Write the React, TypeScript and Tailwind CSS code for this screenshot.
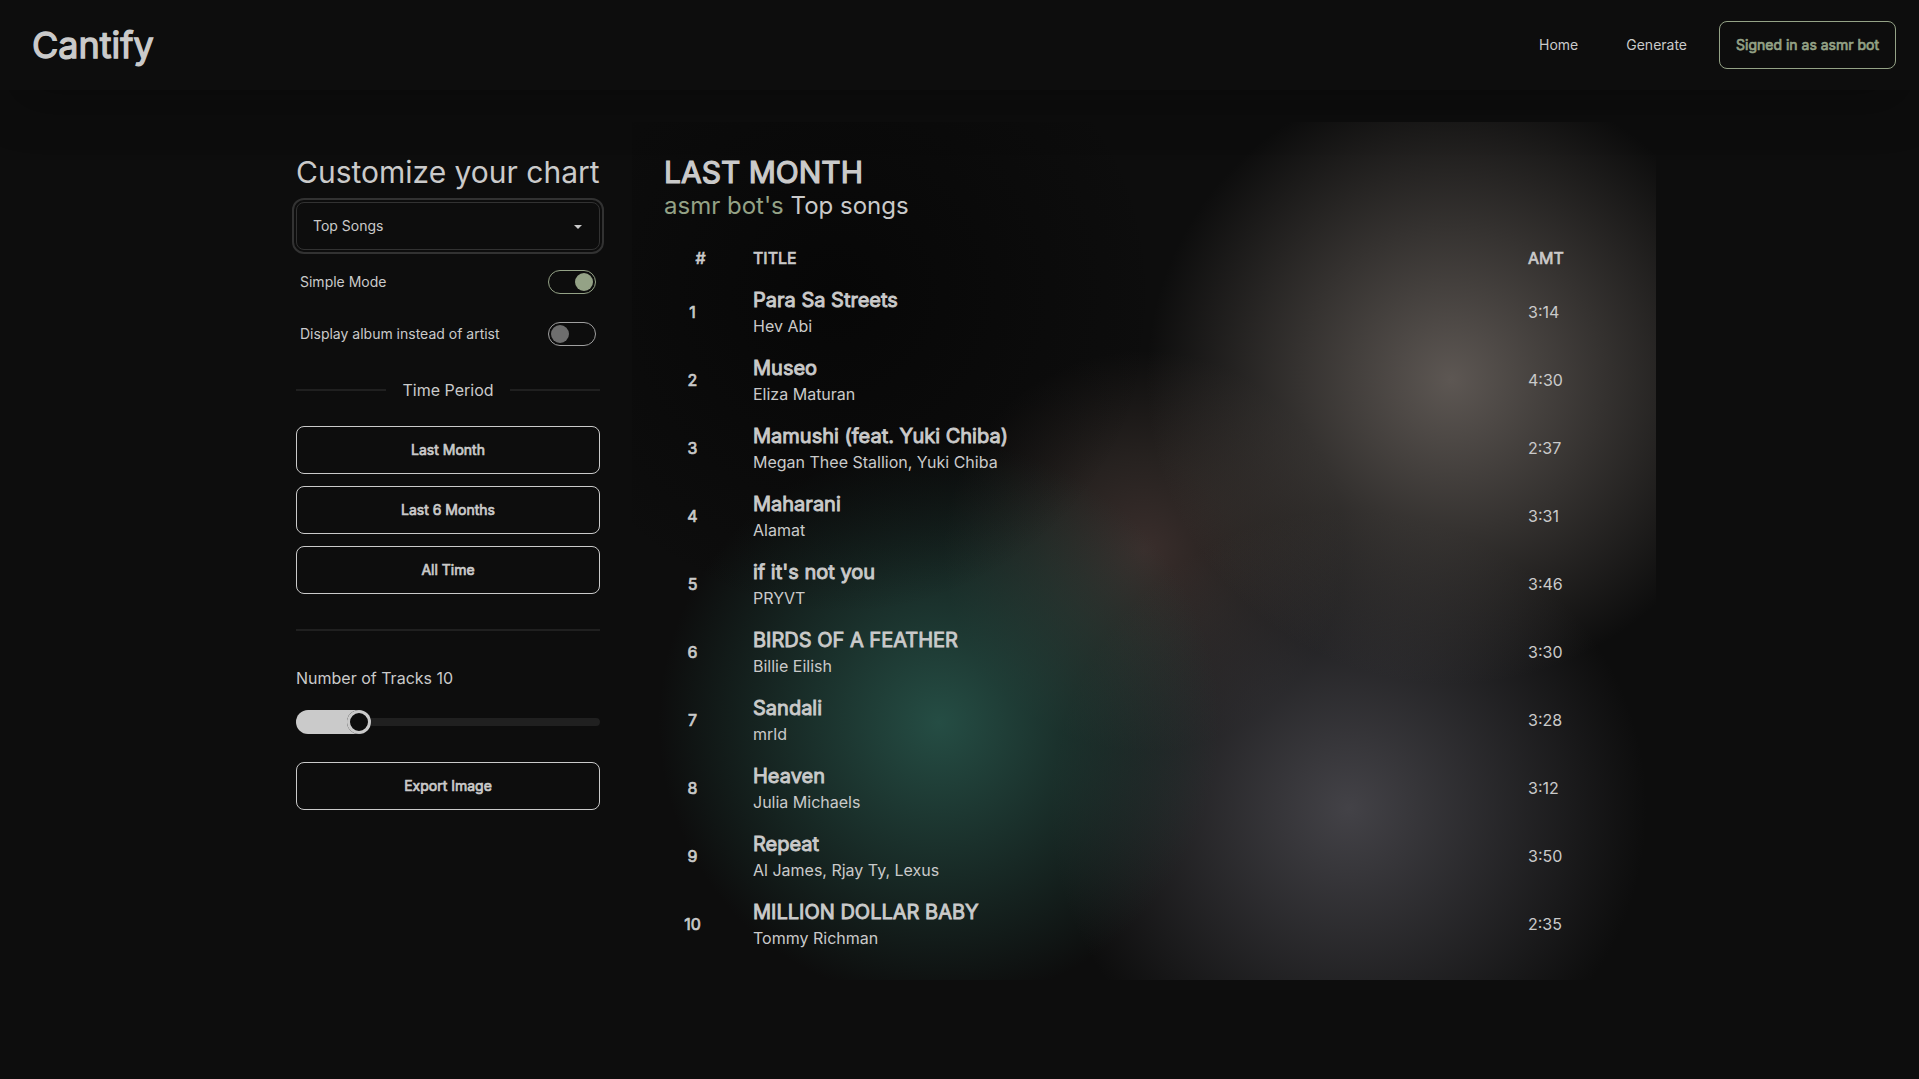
import { useState } from "react";

const tracks = [
  { title: "Para Sa Streets", artist: "Hev Abi", length: "3:14" },
  { title: "Museo", artist: "Eliza Maturan", length: "4:30" },
  { title: "Mamushi (feat. Yuki Chiba)", artist: "Megan Thee Stallion, Yuki Chiba", length: "2:37" },
  { title: "Maharani", artist: "Alamat", length: "3:31" },
  { title: "if it's not you", artist: "PRYVT", length: "3:46" },
  { title: "BIRDS OF A FEATHER", artist: "Billie Eilish", length: "3:30" },
  { title: "Sandali", artist: "mrld", length: "3:28" },
  { title: "Heaven", artist: "Julia Michaels", length: "3:12" },
  { title: "Repeat", artist: "Al James, Rjay Ty, Lexus", length: "3:50" },
  { title: "MILLION DOLLAR BABY", artist: "Tommy Richman", length: "2:35" },
];

const strong = "[-webkit-text-stroke:0.7px_currentColor]";
const outlineButton =
  "flex h-12 w-full items-center justify-center rounded-lg border border-[#cacaca] px-4 text-sm [-webkit-text-stroke:0.7px_currentColor]";

function Toggle({ id, label, initial }: { id: string; label: string; initial: boolean }) {
  const [on, setOn] = useState(initial);
  return (
    <div className="flex h-10 items-center justify-between px-1">
      <label htmlFor={id} className="text-sm">{label}</label>
      <input
        id={id}
        type="checkbox"
        checked={on}
        onChange={(e) => setOn(e.target.checked)}
        className="flex h-6 w-12 appearance-none items-center rounded-full border border-[#a0a0a0] px-[2px] before:size-[18px] before:rounded-full before:bg-[#6e6e6e] checked:justify-end checked:border-[#94a286] checked:before:bg-[#94a286]"
      />
    </div>
  );
}

export default function App() {
  const [count, setCount] = useState(10);
  return (
    <div className="min-h-screen bg-[#0d0d0d] font-['Inter',sans-serif] text-[#cacaca]">
      <header className="flex h-[90px] items-center justify-between bg-[#0d0d0d] pr-[23px] pl-8 shadow-2xl">
        <a href="#" className="text-4xl [-webkit-text-stroke:1.3px_currentColor]">Cantify</a>
        <nav className="flex items-center text-sm">
          <a href="#" className="mr-12">Home</a>
          <a href="#" className="mr-8">Generate</a>
          <button className={"h-12 rounded-lg border border-[#94a286] px-4 text-[#94a286] " + strong}>
            Signed in as asmr bot
          </button>
        </nav>
      </header>

      <main className="mt-8 flex items-start justify-center pl-px">
        <section className="w-[368px] shrink-0 p-8">
          <h1 className="text-3xl whitespace-nowrap">Customize your chart</h1>
          <div className="relative mt-3">
            <select
              aria-label="Chart type"
              className="h-12 w-full appearance-none rounded-lg border border-[#323232] bg-[#0d0d0d] px-4 text-sm outline-2 outline-offset-2 outline-[#323232]"
            >
              <option>Top Songs</option>
              <option>Top Artists</option>
            </select>
            <svg className="pointer-events-none absolute top-[23px] right-[18px]" width="8" height="4" viewBox="0 0 8 4" aria-hidden="true">
              <path d="M0 0H8L4 4Z" fill="currentColor" />
            </svg>
          </div>
          <div className="mt-3 flex flex-col gap-3">
            <Toggle id="simple" label="Simple Mode" initial={true} />
            <Toggle id="album" label="Display album instead of artist" initial={false} />
          </div>

          <div className="mt-6 flex items-center gap-4">
            <div className="h-0.5 grow bg-[#202020]" />
            <h2>Time Period</h2>
            <div className="h-0.5 grow bg-[#202020]" />
          </div>
          <div className="mt-6 flex flex-col gap-3">
            <button className={outlineButton}>Last Month</button>
            <button className={outlineButton}>Last 6 Months</button>
            <button className={outlineButton}>All Time</button>
          </div>
          <hr className="mt-[35px] border-t-2 border-[#202020]" />

          <label htmlFor="count" className="mt-[35px] block">Number of Tracks {count}</label>
          <input
            id="count"
            type="range"
            min={1}
            max={50}
            value={count}
            onChange={(e) => setCount(Number(e.target.value))}
            className="mt-5 block h-6 w-full appearance-none overflow-hidden rounded-full bg-transparent [&::-webkit-slider-runnable-track]:h-2 [&::-webkit-slider-runnable-track]:rounded-full [&::-webkit-slider-runnable-track]:bg-[#202020] [&::-webkit-slider-thumb]:-mt-2 [&::-webkit-slider-thumb]:size-6 [&::-webkit-slider-thumb]:appearance-none [&::-webkit-slider-thumb]:rounded-full [&::-webkit-slider-thumb]:bg-[#0d0d0d] [&::-webkit-slider-thumb]:shadow-[inset_0_0_0_3px_#cacaca,-1610px_0_0_1600px_#cacaca]"
          />
          <button className={outlineButton + " mt-7"}>Export Image</button>
        </section>

        <section className="w-[1024px] bg-[radial-gradient(circle_at_20%_20%,#070707,transparent_30%),radial-gradient(circle_at_80%_30%,#5d5753,transparent_30%),radial-gradient(circle_at_30%_70%,#254d44,transparent_30%),radial-gradient(circle_at_70%_80%,#434247,transparent_30%),radial-gradient(circle_at_50%_50%,#3a2e2c,#332c29a8_14%,transparent_30%)] px-8 pt-8 pb-[22px]">
          <h2 className="text-3xl [-webkit-text-stroke:1.2px_currentColor]">LAST MONTH</h2>
          <p className="text-2xl">
            <span className="text-[#94a286]">asmr bot's</span> Top songs
          </p>
          <table className="mt-4 w-full table-fixed text-left">
            <thead>
              <tr className={strong}>
                <th className="w-[73px] py-2 text-center font-normal">#</th>
                <th className="px-4 py-2 font-normal">TITLE</th>
                <th className="w-28 px-4 py-2 font-normal">AMT</th>
              </tr>
            </thead>
            <tbody>
              {tracks.map((t, i) => (
                <tr key={t.title}>
                  <th className={"py-2 pr-4 text-center font-normal " + strong}>{i + 1}</th>
                  <td className="px-4 py-2">
                    <div className="text-xl [-webkit-text-stroke:0.9px_currentColor]">{t.title}</div>
                    <div>{t.artist}</div>
                  </td>
                  <td className="px-4 py-2">{t.length}</td>
                </tr>
              ))}
            </tbody>
          </table>
        </section>
      </main>
    </div>
  );
}
